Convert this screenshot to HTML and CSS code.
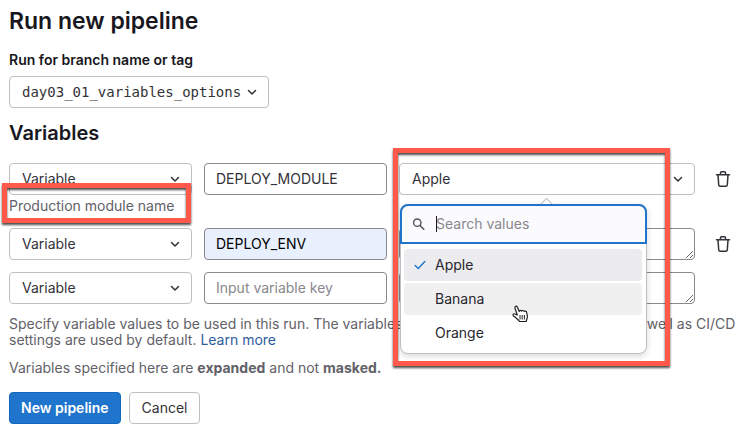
FILE: index.html
```html
<!DOCTYPE html>
<html lang="en">

<head>
  <meta charset="UTF-8">
  <meta name="viewport" content="width=device-width, initial-scale=1.0">
  <title>Run new pipeline</title>
  <link rel="stylesheet" href="styles.css">
</head>

<body>
  <svg class="sprite" aria-hidden="true">
    <symbol id="chevron" viewBox="0 0 16 16">
      <path d="M4.500 6.500 8 10l3.500-3.500" fill="none" stroke="currentColor" stroke-width="1.500" stroke-linecap="round" stroke-linejoin="round" />
    </symbol>
    <symbol id="trash" viewBox="0 0 16 16">
      <path d="M1.500 3.750h13M5.500 3.500V1.750a1 1 0 0 1 1-1h3a1 1 0 0 1 1 1V3.500M3 4l.7 9.800a1.500 1.500 0 0 0 1.500 1.450h5.600a1.500 1.500 0 0 0 1.500-1.450L13 4" fill="none" stroke="currentColor" stroke-width="1.500" stroke-linecap="round" />
    </symbol>
  </svg>

  <form class="pipelineForm">
    <h1 class="title">Run new pipeline</h1>

    <label class="formLabel" for="branch">Run for branch name or tag</label>
    <div class="selectWrap branch">
      <select class="select mono" id="branch">
        <option>day03_01_variables_options</option>
      </select>
      <svg class="chevron"><use href="#chevron" /></svg>
    </div>

    <h2 class="subtitle">Variables</h2>

    <div class="row">
      <div class="selectWrap">
        <select class="select" aria-label="Type">
          <option>Variable</option>
          <option>File</option>
        </select>
        <svg class="chevron"><use href="#chevron" /></svg>
      </div>
      <input class="input" type="text" value="DEPLOY_MODULE" aria-label="Variable key">
      <div class="selectWrap">
        <select class="select" aria-label="Variable value">
          <option>Apple</option>
          <option>Banana</option>
          <option>Orange</option>
        </select>
        <svg class="chevron"><use href="#chevron" /></svg>

        <div class="dropdown">
          <div class="search">
            <svg class="searchIcon" viewBox="0 0 16 16">
              <circle cx="6" cy="6.500" r="4.200" fill="none" stroke="currentColor" stroke-width="1.600" />
              <path d="m9.200 9.700 4.300 4.300" stroke="currentColor" stroke-width="1.800" stroke-linecap="round" />
            </svg>
            <input class="searchInput" type="text" placeholder="Search values" aria-label="Search values">
            <span class="caret"></span>
          </div>
          <div class="options">
            <button class="option selected" type="button">
              <svg class="check" viewBox="0 0 16 16">
                <path d="m2.500 8.500 3.500 3.500 7.500-8" fill="none" stroke="currentColor" stroke-width="1.600" stroke-linecap="round" stroke-linejoin="round" />
              </svg>
              Apple
            </button>
            <button class="option hovered" type="button">
              Banana
              <svg class="pointer" viewBox="0 0 17 18">
                <path d="M5.300 10 3 3.200C2.400 1.200 4.700.4 5.400 2.200L7.200 6.500C7.200 5.200 9.200 5 9.700 6.200c.3-1 2.100-1 2.500.3.700-.9 2.200-.4 2.400.8.400 1.400.9 3 .8 4.700-.1 1.700-1 2.700-1.200 4.500H7.500C6.500 14.500 4.500 13.700 3 12 2 11.500.8 10.800.9 9.800c.2-1.300 1.900-1.300 2.700-.5z" fill="#fff" stroke="#222" stroke-width="1.200" stroke-linejoin="round" />
                <path d="M8 10v4.500M10.200 10v4.500M12.400 10v4.500" stroke="#222" />
              </svg>
            </button>
            <button class="option" type="button">Orange</button>
          </div>
        </div>
        <div class="mark markValues"></div>
      </div>
      <button class="trash" type="button" aria-label="Remove variable"><svg><use href="#trash" /></svg></button>
    </div>

    <div class="description">
      Production module name
      <div class="mark markDescription"></div>
    </div>

    <div class="row">
      <div class="selectWrap">
        <select class="select" aria-label="Type">
          <option>Variable</option>
          <option>File</option>
        </select>
        <svg class="chevron"><use href="#chevron" /></svg>
      </div>
      <input class="input filled" type="text" value="DEPLOY_ENV" aria-label="Variable key">
      <textarea class="input area" aria-label="Variable value"></textarea>
      <button class="trash" type="button" aria-label="Remove variable"><svg><use href="#trash" /></svg></button>
    </div>

    <div class="row">
      <div class="selectWrap">
        <select class="select" aria-label="Type">
          <option>Variable</option>
          <option>File</option>
        </select>
        <svg class="chevron"><use href="#chevron" /></svg>
      </div>
      <input class="input" type="text" placeholder="Input variable key" aria-label="Variable key">
      <textarea class="input area" aria-label="Variable value"></textarea>
    </div>

    <p class="help">Specify variable values to be used in this run. The variables specified in the configuration file as well as CI/CD settings are used by default. <a class="link" href="#">Learn more</a></p>
    <p class="help">Variables specified here are <b>expanded</b> and not <b>masked.</b></p>

    <div class="actions">
      <button class="btn btnConfirm" type="submit">New pipeline</button>
      <button class="btn" type="button">Cancel</button>
    </div>
  </form>
</body>

</html>
```
FILE: styles.css
```css
* {
  box-sizing: border-box;
}

body {
  margin: 0;
  background: #fff;
  color: #333238;
  font-family: Inter, "Liberation Sans", sans-serif;
  font-size: 14px;
  line-height: 16px;
}

input,
select,
textarea,
button {
  font: inherit;
  color: inherit;
}

.sprite {
  position: absolute;
  width: 0;
  height: 0;
}

.pipelineForm {
  padding: 9px 10px 6px 9px;
}

.title {
  margin: 0 0 19px;
  color: #18171d;
  font-size: 23px;
  font-weight: 600;
  line-height: 24px;
}

.formLabel {
  display: block;
  margin-bottom: 8px;
  color: #18171d;
  font-weight: 600;
}

.subtitle {
  margin: 13px 0 17px;
  color: #18171d;
  font-size: 20px;
  font-weight: 600;
  line-height: 25px;
}

.selectWrap {
  position: relative;
}

.branch {
  width: fit-content;
}

.select {
  display: block;
  width: 100%;
  height: 32px;
  padding: 0 28px 0 12px;
  border: 1px solid #bfbfc3;
  border-radius: 4px;
  background: #fff;
  appearance: none;
}

.mono {
  padding-right: 26px;
  font-family: "DejaVu Sans Mono", monospace;
  line-height: 20px;
}

.chevron {
  position: absolute;
  top: 8px;
  right: 9px;
  width: 16px;
  height: 16px;
  pointer-events: none;
}

.row {
  display: grid;
  grid-template-columns: 183px 183px 1fr 32px;
  gap: 12px;
  margin-bottom: 12px;
}

.input {
  display: block;
  width: 100%;
  height: 32px;
  padding: 0 11px 2px;
  border: 1px solid #89888d;
  border-radius: 4px;
  background: #fff;
}

.input::placeholder,
.searchInput::placeholder {
  color: #89888d;
  opacity: 1;
}

.filled {
  background: #e8f0fe;
  color: #000;
}

.area {
  resize: vertical;
}

.trash {
  display: flex;
  align-items: center;
  justify-content: center;
  height: 32px;
  padding: 0;
  border: 0;
  background: none;
}

.trash svg {
  width: 16px;
  height: 16px;
}

.description {
  position: relative;
  margin: -9px 0 14px;
  color: #626168;
}

.dropdown {
  position: absolute;
  z-index: 1;
  top: 41px;
  left: 1px;
  width: 247px;
  border: 1px solid #bfbfc3;
  border-radius: 8px;
  background: #fff;
  box-shadow: 0 2px 6px rgba(0, 0, 0, 0.16);
}

/* little arrow that points at the select */
.dropdown::before {
  content: "";
  position: absolute;
  top: -5px;
  left: 140px;
  width: 9px;
  height: 9px;
  border: 1px solid #bfbfc3;
  background: #fff;
  transform: rotate(45deg);
}

.search {
  position: relative;
  display: flex;
  align-items: center;
  height: 40px;
  margin: -1px;
  padding-left: 10px;
  border: 2px solid #1f75cb;
  border-radius: 8px 8px 0 0;
  background: #fbfafd;
}

.searchIcon {
  width: 14px;
  height: 14px;
  color: #535158;
}

.searchInput {
  flex: 1;
  min-width: 0;
  padding: 0 0 0 10px;
  border: 0;
  outline: 0;
  background: none;
}

.caret {
  position: absolute;
  left: 34px;
  width: 1px;
  height: 16px;
  background: #18171d;
}

.options {
  display: grid;
  gap: 2px;
  padding: 6px 4px 4px 3px;
}

.option {
  position: relative;
  height: 32px;
  padding: 0 31px;
  border: 0;
  border-radius: 4px;
  background: none;
  color: #28272d;
  text-align: left;
}

.selected {
  background: #ececef;
}

.hovered {
  background: #f0f0f0;
}

.check {
  position: absolute;
  top: 9px;
  left: 9px;
  width: 14px;
  height: 14px;
  color: #1f75cb;
}

.pointer {
  position: absolute;
  z-index: 1;
  top: 22px;
  left: 108px;
  width: 17px;
  height: 18px;
}

/* red callout frames */
.mark {
  position: absolute;
  z-index: 2;
  border: 5px solid #ff594c;
  filter: drop-shadow(0 2px 1px rgba(0, 0, 0, 0.7));
  pointer-events: none;
}

.markValues {
  top: -15px;
  left: -6px;
  width: 277px;
  height: 218px;
}

.markDescription {
  top: -15px;
  left: -7px;
  width: 189px;
  height: 40px;
}

.help {
  margin: 0 0 12px;
  color: #626168;
}

.link {
  color: #2f5ca0;
  text-decoration: none;
}

.actions {
  display: flex;
  gap: 8px;
  margin-top: 16px;
}

.btn {
  height: 32px;
  padding: 0 12px;
  border: 1px solid #bfbfc3;
  border-radius: 4px;
  background: #fff;
}

.btnConfirm {
  padding: 0 11px;
  border-color: #1068bf;
  background: #1f75cb;
  color: #fff;
  font-weight: 600;
}
```
